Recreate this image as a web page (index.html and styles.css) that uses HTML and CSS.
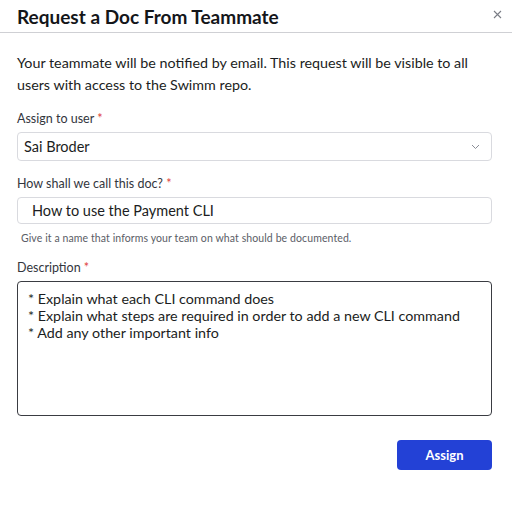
FILE: index.html
```html
<!DOCTYPE html>
<html>
<head>
<meta charset="utf-8">
<link rel="stylesheet" href="styles.css">
</head>
<body>
<div class="modal">
  <header class="modal-header">
    <h1 class="title">Request a Doc From Teammate</h1>
    <span class="close"><svg width="9" height="9" viewBox="0 0 9 9"><path d="M1 1L8 8M8 1L1 8" stroke="#7a7d86" stroke-width="1.1" fill="none"/></svg></span>
  </header>
  <div class="modal-body">
    <p class="intro">Your teammate will be notified by email. This request will be visible to all users with access to the Swimm repo.</p>
    <div class="field">
      <label class="label">Assign to user <span class="req">*</span></label>
      <div class="select">
        <span>Sai Broder</span>
        <svg width="9" height="6" viewBox="0 0 9 6"><path d="M1 1L4.5 4.5L8 1" stroke="#8a8d96" stroke-width="1" fill="none"/></svg>
      </div>
    </div>
    <div class="field">
      <label class="label">How shall we call this doc? <span class="req">*</span></label>
      <div class="input">How to use the Payment CLI</div>
      <div class="help">Give it a name that informs your team on what should be documented.</div>
    </div>
    <div class="field">
      <label class="label">Description <span class="req">*</span></label>
      <div class="textarea">* Explain what each CLI command does<br>* Explain what steps are required in order to add a new CLI command<br>* Add any other important info</div>
    </div>
    <div class="actions">
      <button class="btn">Assign</button>
    </div>
  </div>
</div>
</body>
</html>
```
FILE: styles.css
```css
html, body {
  margin: 0;
  padding: 0;
  background: #fff;
}
body {
  font-family: "Lato", "Noto Sans", sans-serif;
  color: #1b1d22;
}
.modal {
  width: 512px;
  height: 507px;
}
.modal-header {
  display: flex;
  justify-content: space-between;
  align-items: center;
  height: 32px;
  padding: 0 10px 0 17px;
  border-bottom: 1px solid #cfd0d4;
}
.title {
  margin: 0;
  font-size: 19px;
  font-weight: 700;
  color: #14161a;
}
.close {
  display: flex;
  width: 9px;
  height: 9px;
  margin-top: -3px;
}
.modal-body {
  padding: 19px 20px 0 17px;
}
.intro {
  margin: 0 0 15px;
  font-size: 14.3px;
  line-height: 22px;
  color: #1b1d22;
}
.field {
  display: flex;
  flex-direction: column;
  margin-bottom: 9px;
}
.label {
  font-size: 12.5px;
  line-height: 16px;
  color: #33363d;
  margin-bottom: 5px;
}
.req {
  color: #e0413c;
}
.select, .input {
  box-sizing: border-box;
  height: 29px;
  border: 1px solid #d9dadf;
  border-radius: 4px;
  display: flex;
  align-items: center;
  font-size: 14.5px;
  color: #1b1d22;
}
.select {
  justify-content: space-between;
  padding: 0 11px 0 6px;
  margin-bottom: 6px;
}
.input {
  height: 27px;
  padding-left: 14px;
}
.help {
  margin-top: 8px;
  font-size: 10.5px;
  letter-spacing: 0.1px;
  line-height: 12px;
  color: #5a5d66;
  padding-left: 4px;
  margin-bottom: 7px;
}
.textarea {
  box-sizing: border-box;
  height: 135px;
  border: 1px solid #3a3c42;
  border-radius: 4px;
  padding: 8px 10px;
  font-size: 14.3px;
  line-height: 17px;
  color: #1b1d22;
}
.actions {
  display: flex;
  justify-content: flex-end;
  margin-top: 24px;
}
.btn {
  width: 95px;
  height: 30px;
  border: none;
  border-radius: 4px;
  background: #2341d6;
  color: #fff;
  font-family: "Lato", "Noto Sans", sans-serif;
  font-weight: 700;
  font-size: 13px;
}
```
